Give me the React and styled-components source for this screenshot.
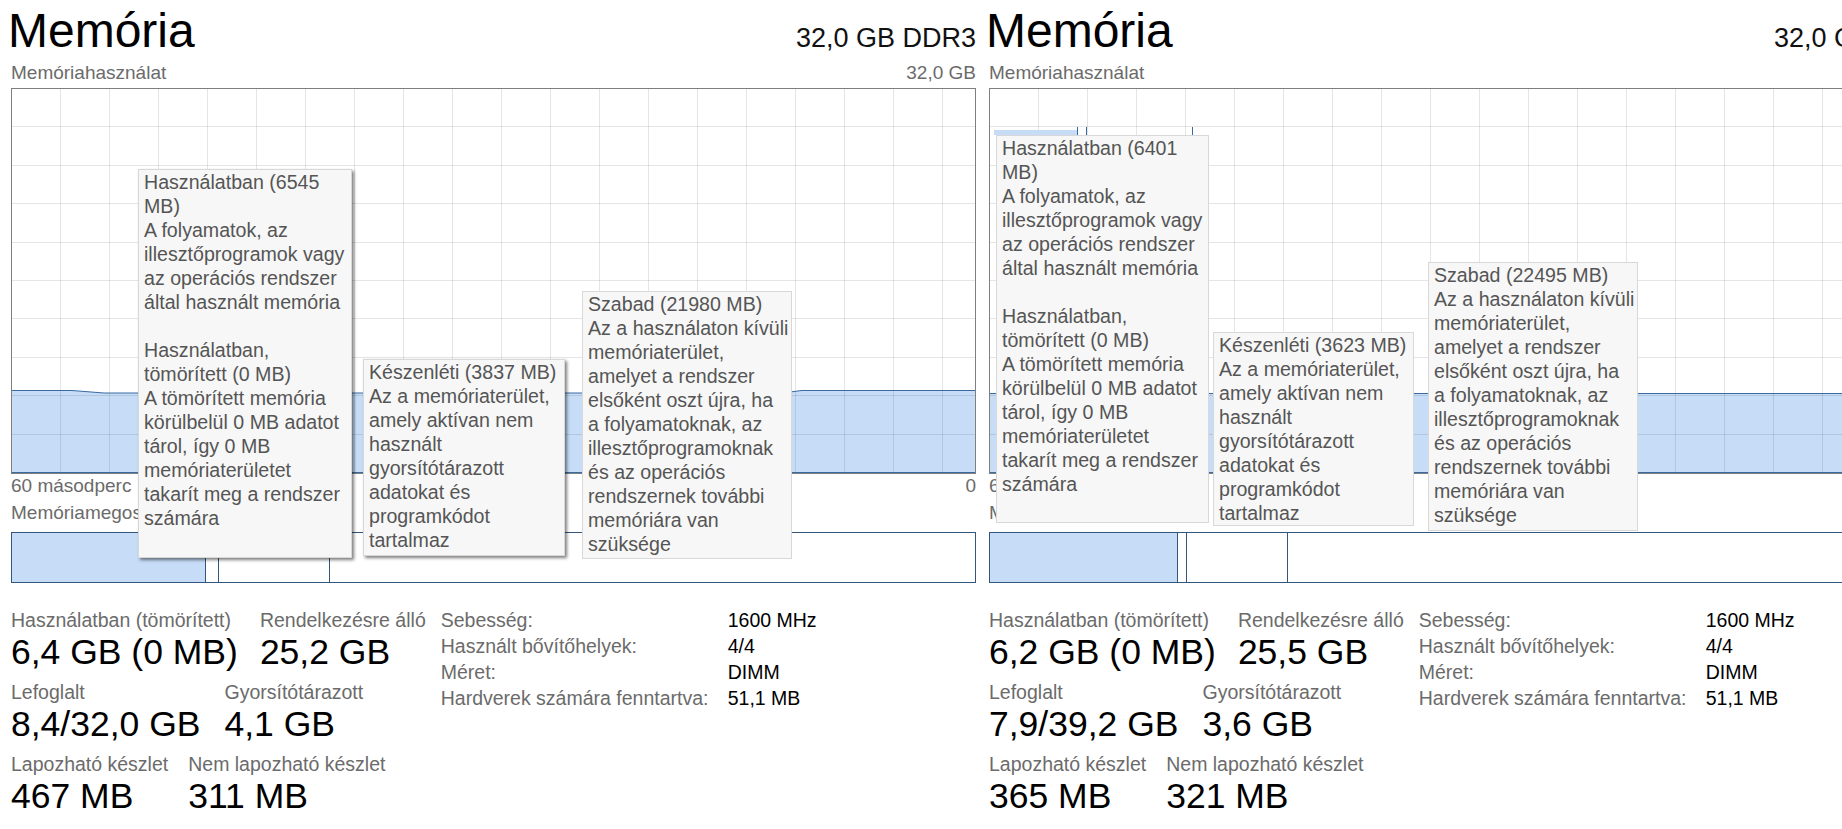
import React from 'react';
import styled, { createGlobalStyle } from 'styled-components';

const GlobalStyle = createGlobalStyle`
  html, body { margin: 0; padding: 0; background: #fff; overflow: hidden; }
  body { font-family: "Liberation Sans", Arial, sans-serif; }
`;

const Page = styled.div`
  display: flex;
  width: 1842px;
  height: 829px;
  overflow: hidden;
  background: #fff;
`;

const Panel = styled.section`
  position: relative;
  flex: 0 0 978px;
  width: 978px;
  box-sizing: border-box;
  padding: 0 2px 0 11px;
`;

const Header = styled.header`
  display: flex;
  justify-content: space-between;
  align-items: baseline;
  height: 62px;
`;

const Title = styled.h1`
  margin: 0 0 0 -3px;
  font-weight: 400;
  font-size: 48px;
  line-height: 62px;
  color: #000;
`;

const Capacity = styled.div`
  font-size: 27px;
  color: #111;
  white-space: nowrap;
`;

const LabelRow = styled.div`
  display: flex;
  justify-content: space-between;
  margin-top: ${p => p.$mt || 0}px;
  font-size: 19px;
  line-height: 22px;
  color: #6b6b6b;
  white-space: nowrap;
`;

const GraphBox = styled.div`
  margin-top: 4px;
  height: 386px;
  box-sizing: border-box;
  border: 1px solid #7f7f7f;
  overflow: hidden;
  svg { display: block; }
`;

const CompBar = styled.div`
  display: flex;
  margin-top: 8px;
  height: 51px;
  box-sizing: border-box;
  border: 1px solid #33567d;
`;

const Segment = styled.div`
  flex: 0 0 ${p => p.$w}px;
  box-sizing: border-box;
  background: ${p => (p.$fill ? '#c7ddf7' : 'transparent')};
  border-right: 1px solid #33567d;
`;

const Stats = styled.div`
  display: flex;
  align-items: flex-start;
  margin-top: 26px;
`;

const Metrics = styled.div`
  display: flex;
  flex-direction: column;
  gap: 8px;
`;

const MetricRow = styled.div`
  display: flex;
  gap: ${p => p.$gap}px;
`;

const Metric = styled.div`
  display: flex;
  flex-direction: column;
`;

const MetricLabel = styled.div`
  font-size: 19.5px;
  line-height: 22px;
  color: #6b6b6b;
  white-space: nowrap;
`;

const MetricValue = styled.div`
  font-size: 35.5px;
  line-height: 42px;
  color: #000;
  white-space: nowrap;
`;

const Info = styled.dl`
  margin: -2px 0 0 15px;
  display: grid;
  grid-template-columns: 287px auto;
  grid-auto-rows: 26px;
  font-size: 19.5px;
  line-height: 26px;
  white-space: nowrap;
`;

const InfoLabel = styled.dt`
  margin: 0;
  color: #6b6b6b;
`;

const InfoValue = styled.dd`
  margin: 0;
  color: #000;
`;

const Tip = styled.div`
  position: absolute;
  left: ${p => p.$x}px;
  top: ${p => p.$y}px;
  width: ${p => p.$w}px;
  height: ${p => p.$h}px;
  box-sizing: border-box;
  padding: 0 0 0 5px;
  background: #f7f7f7;
  border: 1px solid #d8d8d8;
  color: #555;
  font-size: 19.6px;
  line-height: 24px;
  white-space: pre;
  box-shadow: ${p => (p.$shadow ? '2px 2px 3px rgba(0,0,0,0.5)' : 'none')};
`;

const W = 963;
const H = 384;
const FILL = '#c7ddf7';
const LINE = '#3a6aa0';

function UsageChart({ fill, ghost }) {
  const vlines = [];
  for (let x = 48.5; x < W; x += 49) vlines.push(x);
  const hlines = [];
  for (let k = 1; k < 10; k++) hlines.push(Math.round(k * 38.4) - 0.5);
  const top = fill.map(([x, y]) => `${x},${y}`).join(' ');
  const area = `M0,${H} L${fill.map(([x, y]) => `${x},${y}`).join(' L')} L${W},${H} Z`;
  return (
    <svg width={W} height={H} viewBox={`0 0 ${W} ${H}`}>
      <path d={area} fill={FILL} />
      {vlines.map(x => (
        <line key={'v' + x} x1={x} y1={0} x2={x} y2={H} stroke="rgba(0,0,0,0.1)" strokeWidth="1" />
      ))}
      {hlines.map(y => (
        <line key={'h' + y} x1={0} y1={y} x2={W} y2={y} stroke="rgba(0,0,0,0.1)" strokeWidth="1" />
      ))}
      <polyline points={top} fill="none" stroke={LINE} strokeWidth="1" />
      <line x1={0} y1={H - 0.5} x2={W} y2={H - 0.5} stroke={LINE} strokeWidth="1" />
      {ghost && (
        <g>
          <rect x={ghost.x} y={41} width={ghost.w} height={5} fill={FILL} />
          {ghost.lines.map(x => (
            <line key={'g' + x} x1={x + 0.5} y1={38} x2={x + 0.5} y2={50} stroke={LINE} strokeWidth="1" />
          ))}
        </g>
      )}
    </svg>
  );
}

function MemoryPanel({ data }) {
  return (
    <Panel>
      <Header>
        <Title>Memória</Title>
        <Capacity>32,0 GB DDR3</Capacity>
      </Header>
      <LabelRow>
        <span>Memóriahasználat</span>
        <span>32,0 GB</span>
      </LabelRow>
      <GraphBox>
        <UsageChart fill={data.fill} ghost={data.ghost} />
      </GraphBox>
      <LabelRow $mt={1}>
        <span>60 másodperc</span>
        <span>0</span>
      </LabelRow>
      <LabelRow $mt={5}>
        <span>Memóriamegoszlás</span>
      </LabelRow>
      <CompBar>
        <Segment $w={data.bar[0]} $fill />
        <Segment $w={data.bar[1]} />
        <Segment $w={data.bar[2]} />
      </CompBar>
      <Stats>
        <Metrics>
          {data.rows.map((row, i) => (
            <MetricRow key={i} $gap={row.gap}>
              {row.items.map(([label, value]) => (
                <Metric key={label}>
                  <MetricLabel>{label}</MetricLabel>
                  <MetricValue>{value}</MetricValue>
                </Metric>
              ))}
            </MetricRow>
          ))}
        </Metrics>
        <Info>
          <InfoLabel>Sebesség:</InfoLabel>
          <InfoValue>1600 MHz</InfoValue>
          <InfoLabel>Használt bővítőhelyek:</InfoLabel>
          <InfoValue>4/4</InfoValue>
          <InfoLabel>Méret:</InfoLabel>
          <InfoValue>DIMM</InfoValue>
          <InfoLabel>Hardverek számára fenntartva:</InfoLabel>
          <InfoValue>51,1 MB</InfoValue>
        </Info>
      </Stats>
      {data.tips.map((t, i) => (
        <Tip key={i} $x={t.x} $y={t.y} $w={t.w} $h={t.h} $shadow={t.shadow}>
          {t.text}
        </Tip>
      ))}
    </Panel>
  );
}

const inUseText = mb =>
  `Használatban (${mb}\nMB)\nA folyamatok, az\nillesztőprogramok vagy\naz operációs rendszer\náltal használt memória\n\nHasználatban,\ntömörített (0 MB)\nA tömörített memória\nkörülbelül 0 MB adatot\ntárol, így 0 MB\nmemóriaterületet\ntakarít meg a rendszer\nszámára`;

const standbyText = mb =>
  `Készenléti (${mb} MB)\nAz a memóriaterület,\namely aktívan nem\nhasznált\ngyorsítótárazott\nadatokat és\nprogramkódot\ntartalmaz`;

const freeText = mb =>
  `Szabad (${mb} MB)\nAz a használaton kívüli\nmemóriaterület,\namelyet a rendszer\nelsőként oszt újra, ha\na folyamatoknak, az\nillesztőprogramoknak\nés az operációs\nrendszernek további\nmemóriára van\nszüksége`;

const panels = [
  {
    fill: [[0, 301.5], [60, 301.5], [92, 304], [770, 304], [790, 301.5], [963, 301.5]],
    bar: [194, 13, 111],
    rows: [
      { gap: 22, items: [['Használatban (tömörített)', '6,4 GB (0 MB)'], ['Rendelkezésre álló', '25,2 GB']] },
      { gap: 24, items: [['Lefoglalt', '8,4/32,0 GB'], ['Gyorsítótárazott', '4,1 GB']] },
      { gap: 20, items: [['Lapozható készlet', '467 MB'], ['Nem lapozható készlet', '311 MB']] },
    ],
    tips: [
      { x: 138, y: 169, w: 214, h: 389, shadow: true, text: inUseText(6545) },
      { x: 363, y: 359, w: 202, h: 197, shadow: true, text: standbyText(3837) },
      { x: 582, y: 291, w: 210, h: 268, shadow: false, text: freeText(21980) },
    ],
  },
  {
    fill: [[0, 304.5], [963, 304.5]],
    ghost: { x: 4, w: 83, lines: [87, 96, 202] },
    bar: [188, 9, 101],
    rows: [
      { gap: 22, items: [['Használatban (tömörített)', '6,2 GB (0 MB)'], ['Rendelkezésre álló', '25,5 GB']] },
      { gap: 24, items: [['Lefoglalt', '7,9/39,2 GB'], ['Gyorsítótárazott', '3,6 GB']] },
      { gap: 20, items: [['Lapozható készlet', '365 MB'], ['Nem lapozható készlet', '321 MB']] },
    ],
    tips: [
      { x: 18, y: 135, w: 213, h: 388, shadow: false, text: inUseText(6401) },
      { x: 235, y: 332, w: 201, h: 194, shadow: false, text: standbyText(3623) },
      { x: 450, y: 262, w: 210, h: 269, shadow: false, text: freeText(22495) },
    ],
  },
];

export default function App() {
  return (
    <>
      <GlobalStyle />
      <Page>
        {panels.map((p, i) => (
          <MemoryPanel key={i} data={p} />
        ))}
      </Page>
    </>
  );
}
